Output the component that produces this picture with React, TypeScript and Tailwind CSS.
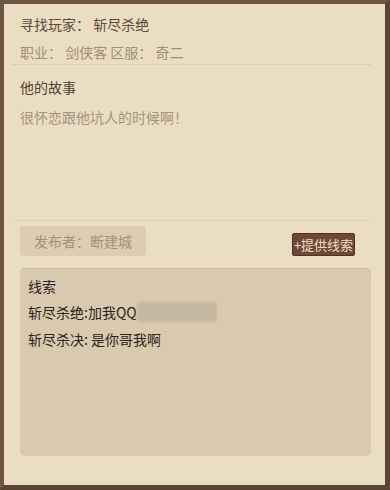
import React from "react";

const font = { fontFamily: '"Microsoft YaHei", "Noto Sans CJK SC", "Noto Sans", sans-serif' };

export default function App() {
  return (
    <div className="h-[490px] w-[390px] bg-[#5a4436]" style={font}>
      <div className="relative flex h-full w-full flex-col border-t-[4px] border-l-[4px] border-r-[5px] border-b-[5px] border-t-[#6e5545] border-l-[#6e5545] border-r-[#5c4435] border-b-[#5c4435] bg-[#ebddc1]">
        <div className="flex flex-col px-[16px] pr-[14px]">
          <div className="mt-[10px] text-[14px] leading-[20px] text-[#5a4b3c]">寻找玩家： 斩尽杀绝</div>
          <div className="mt-[8px] text-[14px] leading-[20px] text-[#9d8d7a]">职业： 剑侠客 区服： 奇二</div>
        </div>
        <div className="mx-[8px] mr-[14px] mt-[2px] h-px bg-[#dccdb1]" />

        <div className="flex flex-col px-[16px]">
          <div className="mt-[12px] text-[14px] leading-[20px] text-[#4e4134]">他的故事</div>
          <div className="mt-[10px] text-[14px] leading-[20px] text-[#a29381]">很怀恋跟他坑人的时候啊！</div>
        </div>

        <div className="mx-[8px] mr-[14px] mt-[93px] h-px bg-[#dfd1b6]" />

        <div className="flex items-start justify-between px-[16px] pr-[30px]">
          <div className="mt-[5px] flex h-[30px] w-[126px] items-center justify-center rounded-[4px] bg-[#dccdb1] text-[14px] text-[#a08f7b]">
            发布者：断建城
          </div>
          <button className="mt-[12px] flex h-[23px] w-[63px] items-center justify-center rounded-[2px] border border-[#4d3325] bg-[#6e4939] text-[13px] leading-none text-[#f2dcc3]">
            +提供线索
          </button>
        </div>

        <div className="ml-[16px] mr-[14px] mt-[12px] flex h-[188px] flex-col rounded-[5px] bg-[#d9c9ae] px-[8px] pt-[8px] text-[14px] leading-[20px] text-[#2a241e] shadow-[inset_0_1px_0_#cdbda1]">
          <div>线索</div>
          <div className="mt-[6px] flex items-center">
            <span>斩尽杀绝:加我QQ</span>
            <span className="h-[20px] w-[80px] rounded-[3px] bg-[#c6b7a1] blur-[1px]" />
          </div>
          <div className="mt-[7px]">斩尽杀决: 是你哥我啊</div>
        </div>
      </div>
    </div>
  );
}
